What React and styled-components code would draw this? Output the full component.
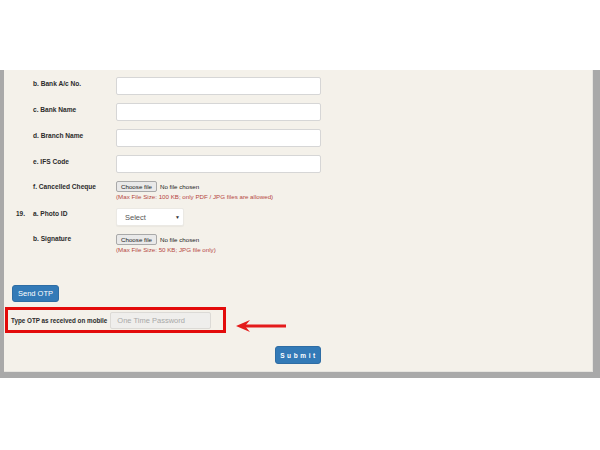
import React from "react";
import styled, { createGlobalStyle } from "styled-components";

const GlobalStyle = createGlobalStyle`
  html, body {
    margin: 0;
    padding: 0;
    background: #ffffff;
    font-family: "Liberation Sans", Arial, sans-serif;
  }
`;

const TopSpace = styled.div`
  height: 70px;
  background: #ffffff;
`;

const Backdrop = styled.div`
  background: #a9a9a9;
  padding: 0 7px 6px 4px;
`;

const Panel = styled.div`
  background: #f4f1ea;
  border-right: 1px solid #e6e4df;
  border-bottom: 1px solid #e6e4df;
  padding: 7px 0 7px 0;
`;

const Row = styled.div`
  display: grid;
  grid-template-columns: 17px 83px 1fr;
  align-items: start;
  padding-left: 12px;
  margin-bottom: ${(p) => p.gap || 8}px;
`;

const Num = styled.div`
  font-size: 6.5px;
  font-weight: bold;
  color: #2b2b2b;
  padding-top: ${(p) => p.top || 3}px;
`;

const Label = styled.div`
  font-size: 6.6px;
  font-weight: bold;
  color: #2b2b2b;
  padding-top: ${(p) => p.top || 3}px;
`;

const TextInput = styled.div`
  width: 205px;
  height: 18px;
  box-sizing: border-box;
  background: #ffffff;
  border: 1px solid #d6d6d6;
  border-radius: 2px;
`;

const FileLine = styled.div`
  display: flex;
  align-items: center;
  gap: 3px;
  height: 11px;
`;

const FileButton = styled.span`
  display: inline-flex;
  align-items: center;
  height: 11px;
  box-sizing: border-box;
  padding: 0 4px;
  background: #e9e9e9;
  border: 1px solid #a9a9a9;
  border-radius: 2px;
  font-size: 6.2px;
  color: #222;
`;

const FileText = styled.span`
  font-size: 6.2px;
  color: #222;
`;

const Note = styled.div`
  font-size: 6.2px;
  color: #b5473f;
  margin-top: 1px;
`;

const Select = styled.div`
  width: 68px;
  height: 18px;
  box-sizing: border-box;
  background: #ffffff;
  border: 1px solid #ebe9e4;
  border-radius: 2px;
  box-shadow: 0 1px 1px rgba(0, 0, 0, 0.04);
  display: flex;
  align-items: center;
  justify-content: space-between;
  padding: 0 3px 0 8px;
  font-size: 7.5px;
  color: #555;
`;

const Caret = styled.span`
  font-size: 5px;
  color: #333;
`;

const Actions = styled.div`
  padding-left: 8px;
  margin-top: 32px;
`;

const BlueButton = styled.button`
  background: #337ab7;
  border: 1px solid #2e6da4;
  border-radius: 3px;
  color: #ffffff;
  font-family: "Liberation Sans", Arial, sans-serif;
  padding: 0;
  cursor: pointer;
  display: block;
`;

const SendButton = styled(BlueButton)`
  width: 47px;
  height: 17px;
  font-size: 7.5px;
`;

const OtpLine = styled.div`
  display: flex;
  align-items: center;
  gap: 10px;
  margin: 5px 0 0 1px;
`;

const OtpBox = styled.div`
  display: flex;
  align-items: center;
  gap: 3px;
  width: 221px;
  height: 26px;
  box-sizing: border-box;
  border: 3px solid #e30b0b;
  padding: 0 0 0 3px;
`;

const OtpLabel = styled.span`
  font-size: 6.3px;
  font-weight: bold;
  color: #2b2b2b;
  white-space: nowrap;
`;

const OtpInput = styled.input`
  width: 101px;
  height: 17px;
  box-sizing: border-box;
  background: #efeeec;
  border: 1px solid #dcdad6;
  border-radius: 2px;
  font-family: "Liberation Sans", Arial, sans-serif;
  font-size: 7.5px;
  padding: 0 6px;
  margin-top: 1px;
  outline: none;
  &::placeholder {
    color: #a8a8a8;
  }
`;

const Arrow = styled.svg`
  margin-top: 11px;
  display: block;
`;

const SubmitRow = styled.div`
  display: flex;
  justify-content: center;
  margin-top: 13px;
`;

const SubmitButton = styled(BlueButton)`
  width: 46px;
  height: 18px;
  font-size: 6.5px;
  font-weight: bold;
  letter-spacing: 2.6px;
  padding-left: 2px;
`;

const textRows = ["b. Bank A/c No.", "c. Bank Name", "d. Branch Name", "e. IFS Code"];

export default function App() {
  return (
    <>
      <GlobalStyle />
      <TopSpace />
      <Backdrop>
        <Panel>
          {textRows.map((t) => (
            <Row key={t}>
              <Num />
              <Label>{t}</Label>
              <TextInput />
            </Row>
          ))}
          <Row gap={8}>
            <Num />
            <Label top={2}>f. Cancelled Cheque</Label>
            <div>
              <FileLine>
                <FileButton>Choose file</FileButton>
                <FileText>No file chosen</FileText>
              </FileLine>
              <Note>(Max File Size: 100 KB; only PDF / JPG files are allowed)</Note>
            </div>
          </Row>
          <Row gap={8}>
            <Num top={2}>19.</Num>
            <Label top={2}>a. Photo ID</Label>
            <Select>
              Select <Caret>▼</Caret>
            </Select>
          </Row>
          <Row>
            <Num />
            <Label top={1}>b. Signature</Label>
            <div>
              <FileLine>
                <FileButton>Choose file</FileButton>
                <FileText>No file chosen</FileText>
              </FileLine>
              <Note>(Max File Size: 50 KB; JPG file only)</Note>
            </div>
          </Row>
          <Actions>
            <SendButton>Send OTP</SendButton>
          </Actions>
          <OtpLine>
            <OtpBox>
              <OtpLabel>Type OTP as received on mobile</OtpLabel>
              <OtpInput placeholder="One Time Password" />
            </OtpBox>
            <Arrow width="50" height="12" viewBox="0 0 50 12">
              <path d="M8 6 H50" stroke="#e41b1b" strokeWidth="3" />
              <path d="M0 6 L14 0 L9 6 L14 12 Z" fill="#e41b1b" />
            </Arrow>
          </OtpLine>
          <SubmitRow>
            <SubmitButton>Submit</SubmitButton>
          </SubmitRow>
        </Panel>
      </Backdrop>
    </>
  );
}
